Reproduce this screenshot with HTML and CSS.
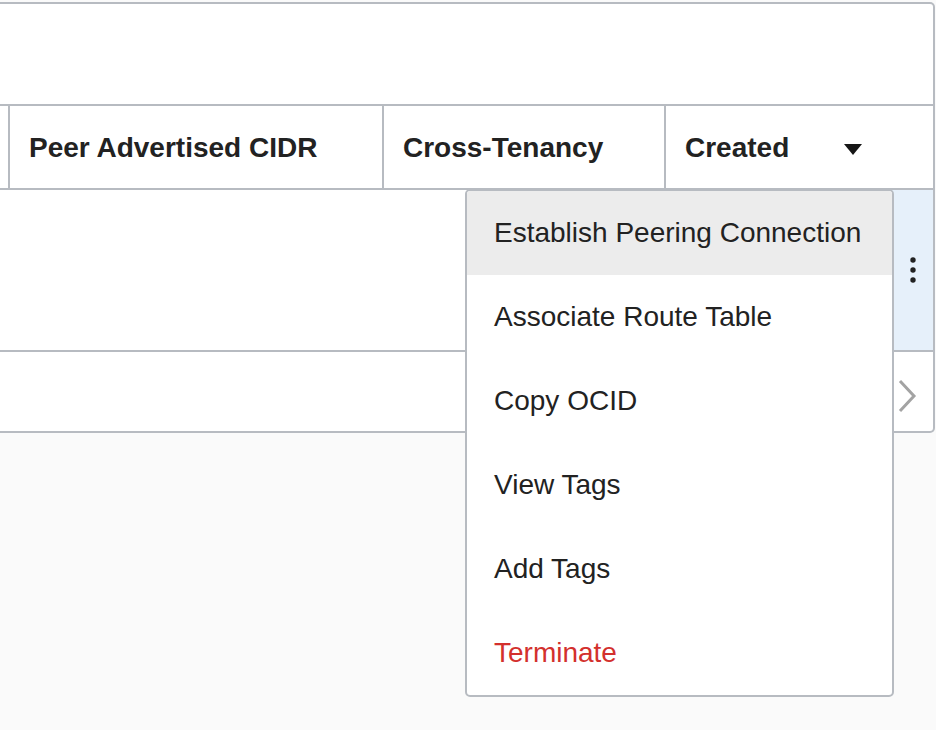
FILE: index.html
```html
<!DOCTYPE html>
<html>
<head>
<meta charset="utf-8">
<link rel="stylesheet" href="styles.css">
</head>
<body>
<div class="page">
<div class="table">
  <div class="toolbar"></div>
  <div class="head">
    <div class="hcell first"></div>
    <div class="hcell">Peer Advertised CIDR</div>
    <div class="hcell">Cross-Tenancy</div>
    <div class="hcell sort">Created
      <svg class="caret" width="18" height="11" viewBox="0 0 18 11"><polygon points="0,0 18,0 9,11" fill="#161616"/></svg>
    </div>
  </div>
  <div class="row">
    <div class="rcell"></div>
    <div class="actions">
      <svg width="8" height="28" viewBox="0 0 8 28"><circle cx="4" cy="4" r="2.7" fill="#222"/><circle cx="4" cy="14" r="2.7" fill="#222"/><circle cx="4" cy="24" r="2.7" fill="#222"/></svg>
    </div>
  </div>
  <div class="pager">
    <svg class="chev" width="20" height="34" viewBox="0 0 20 34"><polyline points="3,2 17,17 3,32" fill="none" stroke="#a3a3a3" stroke-width="3"/></svg>
  </div>
  <ul class="menu">
    <li class="item active">Establish Peering Connection</li>
    <li class="item">Associate Route Table</li>
    <li class="item">Copy OCID</li>
    <li class="item">View Tags</li>
    <li class="item">Add Tags</li>
    <li class="item danger">Terminate</li>
  </ul>
</div>
</div>
</body>
</html>
```

FILE: styles.css
```css
html, body {
  margin: 0;
  padding: 0;
  height: 100%;
  background: #fafafa;
  font-family: "Liberation Sans", Arial, sans-serif;
  color: #222;
}
.page {
  min-height: 730px;
  padding-top: 2px;
  box-sizing: border-box;
}
.table {
  position: relative;
  width: 933px;
  background: #fff;
  border: 2px solid #b7bbc1;
  border-left: none;
  border-radius: 0 5px 5px 0;
}
.toolbar {
  height: 100px;
  border-bottom: 2px solid #b7bbc1;
}
.head {
  display: grid;
  grid-template-columns: 8px 374px 282px 1fr;
  height: 82px;
  border-bottom: 2px solid #b7bbc1;
}
.hcell {
  display: flex;
  align-items: center;
  border-left: 2px solid #b7bbc1;
  padding-left: 19px;
  padding-top: 2px;
  font-weight: bold;
  font-size: 28px;
  color: #222;
}
.hcell.first {
  border-left: none;
  padding: 0;
}
.sort .caret {
  margin-left: 55px;
  margin-top: 2px;
}
.row {
  display: flex;
  height: 160px;
  border-bottom: 2px solid #b7bbc1;
}
.rcell {
  flex: 1;
}
.actions {
  width: 60px;
  background: #e6f0fa;
  display: flex;
  align-items: center;
  justify-content: flex-end;
  padding-right: 16px;
  box-sizing: border-box;
}
.pager {
  height: 79px;
  display: flex;
  align-items: center;
  justify-content: flex-end;
  padding-right: 16px;
}
.chev {
  margin-top: 9px;
}
.menu {
  position: absolute;
  z-index: 5;
  left: 465px;
  top: 185px;
  width: 429px;
  margin: 0;
  padding: 0;
  list-style: none;
  background: #fff;
  border: 2px solid #b7bbc1;
  border-radius: 5px;
  box-sizing: border-box;
  overflow: hidden;
}
.item {
  height: 84px;
  display: flex;
  align-items: center;
  padding-left: 27px;
  font-size: 28px;
  color: #222;
}
.item.active {
  background: #ececec;
}
.item.danger {
  color: #d3302d;
}
```
